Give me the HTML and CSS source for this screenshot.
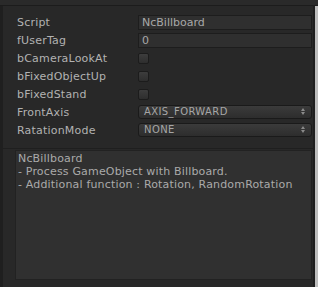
FILE: index.html
```html
<!DOCTYPE html>
<html>
<head>
<meta charset="utf-8">
<link rel="stylesheet" href="styles.css">
</head>
<body>
<div class="frame">
  <div class="topbar"></div>
  <div class="panel">
    <div class="inner">
      <div class="props">
        <div class="row"><span class="label">Script</span><div class="field text">NcBillboard</div></div>
        <div class="row"><span class="label">fUserTag</span><div class="field text">0</div></div>
        <div class="row"><span class="label">bCameraLookAt</span><div class="check"></div></div>
        <div class="row"><span class="label">bFixedObjectUp</span><div class="check"></div></div>
        <div class="row"><span class="label">bFixedStand</span><div class="check"></div></div>
        <div class="row"><span class="label">FrontAxis</span><div class="field popup">AXIS_FORWARD<span class="arrows"><i class="up"></i><i class="down"></i></span></div></div>
        <div class="row"><span class="label">RatationMode</span><div class="field popup">NONE<span class="arrows"><i class="up"></i><i class="down"></i></span></div></div>
      </div>
      <div class="sep"></div>
      <div class="help">NcBillboard<br>- Process GameObject with Billboard.<br>- Additional function : Rotation, RandomRotation</div>
    </div>
    <div class="scroll"></div>
  </div>
</div>
</body>
</html>
```
FILE: styles.css
```css
html, body { margin: 0; padding: 0; }
body {
  width: 318px; height: 287px; overflow: hidden;
  background: #282828;
  font-family: "DejaVu Sans", sans-serif;
  font-size: 11px;
  color: #b2b2b2;
}
.frame { width: 318px; height: 287px; display: flex; flex-direction: column; }
.topbar { height: 5px; background: #2a2a2a; border-bottom: 1px solid #1c1c1c; }
.panel { flex: 1; display: flex; }
.inner {
  flex: 1; display: flex; flex-direction: column;
  border-left: 3px solid #1f1f1f;
  border-right: 2px solid #1e1e1e;
  padding-left: 12px;
  padding-right: 1px;
}
.scroll { width: 3px; background: #bdbdbd; }
.props { display: flex; flex-direction: column; padding-top: 7px; }
.row { height: 18px; display: flex; align-items: center; }
.label { width: 121px; padding-left: 2px; line-height: 13px; letter-spacing: 0.2px; }
.field { flex: 1; box-sizing: border-box; height: 15px; line-height: 13px; }
.field.text {
  background: #2f2f2f; border: 1px solid #1d1d1d;
  padding-left: 3px;
  color: #a8a8a8;
}
.check {
  width: 11px; height: 11px; box-sizing: border-box;
  border: 1px solid #1c1c1c; border-radius: 2px;
  background: linear-gradient(#3d3d3d, #2e2e2e);
}
.field.popup {
  height: 14px; line-height: 12px;
  border: 1px solid #1a1a1a; border-radius: 3px;
  background: linear-gradient(#3b3b3b, #2d2d2d);
  padding-left: 5px;
  position: relative;
  color: #a6a6a6;
  font-size: 10px;
  letter-spacing: 0.4px;
}
.arrows { position: absolute; right: 6px; top: 2px; display: flex; flex-direction: column; gap: 1px; }
.arrows i { display: block; width: 0; height: 0; border-left: 2px solid transparent; border-right: 2px solid transparent; }
.arrows .up { border-bottom: 3px solid #8a8a8a; }
.arrows .down { border-top: 3px solid #8a8a8a; }
.sep { height: 1px; background: #1f1f1f; margin-top: 9px; margin-left: -12px; margin-right: -1px; }
.help {
  margin-top: 1px;
  height: 130px; box-sizing: border-box;
  background: #303030;
  border: 1px solid #222;
  padding: 1px 0 0 2px;
  line-height: 13px;
  color: #aaaaaa;
  letter-spacing: 0.17px;
}
```
